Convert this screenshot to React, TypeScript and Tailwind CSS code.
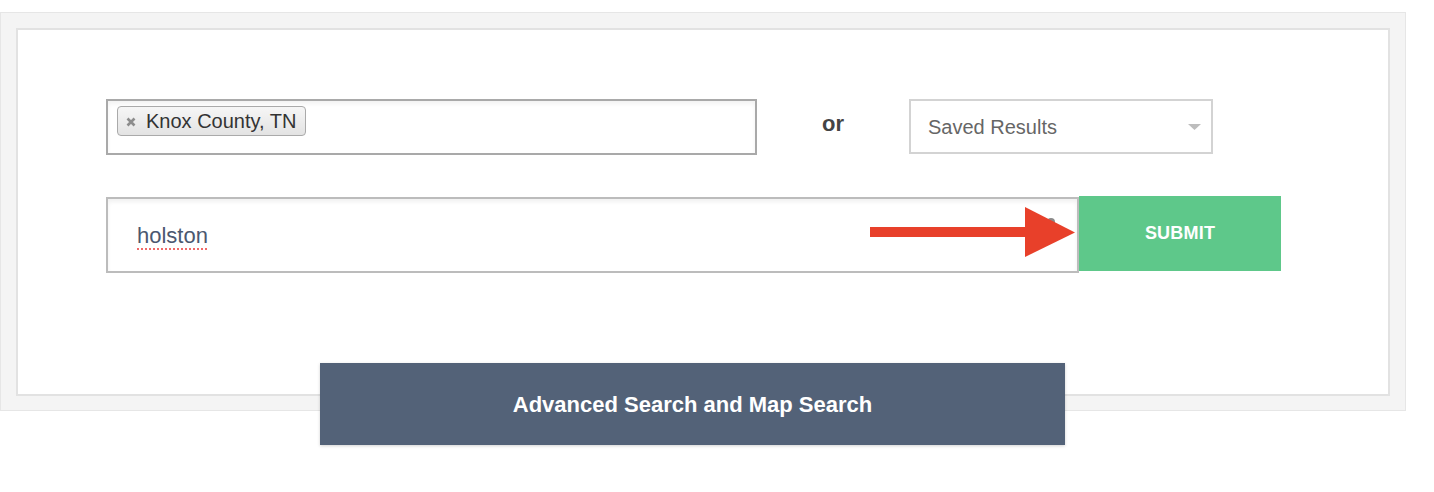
import React from 'react';

const font = { fontFamily: '"Liberation Sans", Arial, Helvetica, sans-serif' };

function Caret() {
  return (
    <svg width="13" height="6" viewBox="0 0 13 6" className="block">
      <path d="M0 0 L13 0 L6.5 6 Z" fill="#bdbdbd" />
    </svg>
  );
}

function ChipClose() {
  return (
    <svg width="10" height="10" viewBox="0 0 10 10" className="block">
      <path d="M1.5 1.5 L8.5 8.5 M8.5 1.5 L1.5 8.5" stroke="#8c8c8c" strokeWidth="2.6" strokeLinecap="butt" />
    </svg>
  );
}

function RedArrow() {
  return (
    <svg width="210" height="52" viewBox="0 0 210 52" className="block">
      <rect x="0" y="20" width="160" height="10" fill="#e8402a" />
      <path d="M155 0 L205 25.5 L155 50 Z" fill="#e8402a" />
    </svg>
  );
}

export default function App() {
  return (
    <div className="w-[1434px] h-[492px] bg-white overflow-hidden" style={font}>
      {/* outer gray panel */}
      <div className="mt-[12px] w-[1406px] h-[399px] border border-[#e6e6e6] bg-[#f4f4f4] pt-[15px] pl-[15px]">
        {/* inner white panel */}
        <div className="w-[1374px] h-[368px] border-2 border-[#e2e2e2] bg-white pt-[69px] pl-[88px]">
          {/* row 1 */}
          <div className="flex items-start">
            <div className="w-[651px] h-[56px] border-2 border-[#a9a9a9] bg-white pt-[5px] pl-[9px] shadow-[inset_0_3px_4px_rgba(0,0,0,0.05)]">
              <div className="inline-flex items-center h-[30px] pl-[8px] pr-[9px] rounded-[4px] border border-[#aaaaaa] bg-gradient-to-b from-[#f6f6f6] to-[#e3e3e3]">
                <span className="mr-[10px] mt-[2px]">
                  <ChipClose />
                </span>
                <span className="text-[20px] text-[#333333] leading-none">Knox County, TN</span>
              </div>
            </div>
            <div className="w-[152px] h-[48px] flex items-center justify-center">
              <span className="text-[22px] font-bold text-[#444444]">or</span>
            </div>
            <div className="w-[304px] h-[55px] border-2 border-[#d3d3d3] bg-white flex items-center justify-between pl-[17px] pr-[10px]">
              <span className="text-[20px] text-[#666666] pt-[1px]">Saved Results</span>
              <Caret />
            </div>
          </div>

          {/* row 2 */}
          <div className="relative flex items-start mt-[42px]">
            <div className="relative w-[973px] h-[76px] border-2 border-[#bcbcbc] bg-white flex items-center pl-[29px] shadow-[inset_0_3px_4px_rgba(0,0,0,0.06)]">
              <span className="text-[22px] text-[#4b5870] underline decoration-dotted decoration-[#f06a6a] decoration-[2px] underline-offset-[5px] pt-[1px]">
                holston
              </span>
              <span className="absolute left-[939px] top-[19px] w-[8px] h-[8px] rounded-full bg-[#8a8a8a]" />
            </div>
            <button className="w-[202px] h-[75px] -mt-[1px] bg-[#5ec88a] text-white text-[18px] font-bold tracking-[0.2px] flex items-center justify-center">
              SUBMIT
            </button>
            <div className="absolute left-[764px] top-[10px]">
              <RedArrow />
            </div>
          </div>
        </div>
      </div>

      {/* advanced search button, overlapping the panel */}
      <div className="-mt-[48px] ml-[320px] relative">
        <button className="w-[745px] h-[82px] bg-[#536278] text-white text-[22px] font-bold flex items-center justify-center pt-[1px] shadow-[0_1px_3px_rgba(0,0,0,0.18)]">
          Advanced Search and Map Search
        </button>
      </div>
    </div>
  );
}
